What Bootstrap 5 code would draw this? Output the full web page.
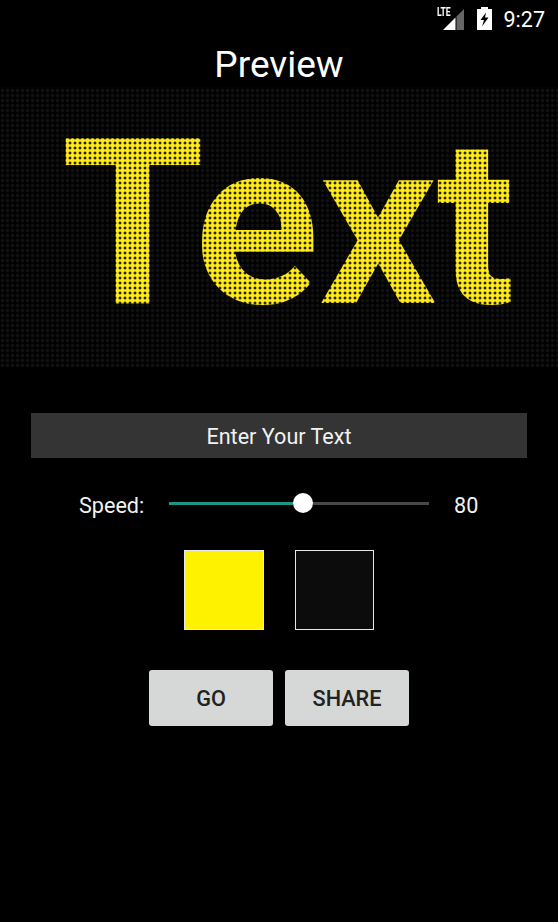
<!DOCTYPE html>
<html lang="en">
<head>
<meta charset="utf-8">
<title>Preview</title>
<link rel="stylesheet" href="https://cdn.jsdelivr.net/npm/bootstrap@5.3.0/dist/css/bootstrap.min.css">
<style>
html,body{height:100%;}
body{background:#000;color:#fff;font-family:Roboto,"Liberation Sans",sans-serif;width:558px;height:922px;overflow:hidden;}
.status-strip{height:32px;padding-right:13px;padding-top:4px;}
.lte-wrap{position:relative;width:30px;height:24px;margin-right:13px;}
.lte-tag{position:absolute;left:3px;top:1px;font-size:12px;font-weight:700;line-height:11px;letter-spacing:-.3px;transform:scaleX(.72);transform-origin:left top;}
.clock{font-size:21.5px;line-height:30px;margin-left:12px;margin-top:4px;}
.screen-title{font-size:37px;line-height:44px;padding-top:11px;height:55px;box-sizing:border-box;margin:0;font-weight:400;text-align:center;}
.led-panel{height:280px;background-color:#000;background-image:radial-gradient(circle at 2.5px 2.5px,#141414 0,#101010 1.2px,#010101 2.4px);background-size:5px 5px;background-position:0 1px;overflow:hidden;}
.led-text{font-family:Roboto,"Liberation Sans",sans-serif;font-weight:700;font-size:232px;line-height:274px;letter-spacing:-.4px;padding-left:61px;white-space:nowrap;color:transparent;background-image:radial-gradient(circle at 2.5px 2.5px,#ffea1c 0,#ffea1c 2px,#3a3400 2.7px,#050400 3.1px);background-size:5px 5px;background-position:0 1px;-webkit-background-clip:text;background-clip:text;height:280px;}
.text-entry{margin:46px 31px 0;height:45px;background:#343434;font-size:21.6px;line-height:47px;text-align:center;color:#f2f2f2;}
.speed-row{margin-top:29px;height:34px;padding-left:79px;}
.speed-label{width:90px;font-size:21.6px;line-height:36px;margin-top:3px;color:#f2f2f2;}
.track{width:260px;height:20px;margin-top:-2px;}
.track-on{flex:0 0 124px;height:3px;background:#1e9484;}
.track-off{flex:0 0 116px;height:3px;background:#484848;}
.thumb{flex:0 0 20px;height:20px;border-radius:50%;background:#fff;}
.speed-val{margin-left:25px;font-size:21.6px;line-height:36px;margin-top:3px;color:#f2f2f2;}
.swatch-row{margin-top:29px;gap:31px;}
.swatch{width:80px;height:79.500px;border:1px solid #e8e8e8;}
.swatch-y{background:#fff200;}
.swatch-k{background:#0c0c0c;width:79px;}
.act-row{margin-top:40.500px;gap:12px;}
.act-btn{width:124px;height:56px;background:#d6d7d7;border:0;border-radius:3px;color:#222;font-size:21.7px;font-weight:500;line-height:56px;padding:1px 0 0;text-align:center;}
.act-btn:hover{background:#d6d7d7;color:#222;}
</style>
</head>
<body>
<div class="d-flex justify-content-end align-items-center status-strip">
  <div class="lte-wrap">
    <svg width="30" height="24" viewBox="0 0 30 24" class="d-block"><path d="M22.500 10.500 30 3V24H22.500Z" fill="#666"/><path d="M9 24 21.500 11.500V24Z" fill="#fff"/></svg>
    <span class="lte-tag">LTE</span>
  </div>
  <svg width="15" height="24" viewBox="0 0 15 24"><path d="M4 1h7v2h4v21H0V3h4z" fill="#fff"/><path d="M9 6.500 3.500 14H7L5 20.500 11.500 11.500H8z" fill="#000"/></svg>
  <span class="clock">9:27</span>
</div>
<h1 class="screen-title">Preview</h1>
<div class="led-panel"><div class="led-text">Text</div></div>
<div class="text-entry">Enter Your Text</div>
<div class="d-flex align-items-center speed-row">
  <span class="speed-label">Speed:</span>
  <div class="d-flex align-items-center track">
    <div class="track-on"></div><div class="thumb"></div><div class="track-off"></div>
  </div>
  <span class="speed-val">80</span>
</div>
<div class="d-flex justify-content-center swatch-row">
  <div class="swatch swatch-y"></div>
  <div class="swatch swatch-k"></div>
</div>
<div class="d-flex justify-content-center act-row">
  <button type="button" class="btn act-btn">GO</button>
  <button type="button" class="btn act-btn">SHARE</button>
</div>
<script src="https://cdn.jsdelivr.net/npm/bootstrap@5.3.0/dist/js/bootstrap.bundle.min.js"></script>
</body>
</html>
